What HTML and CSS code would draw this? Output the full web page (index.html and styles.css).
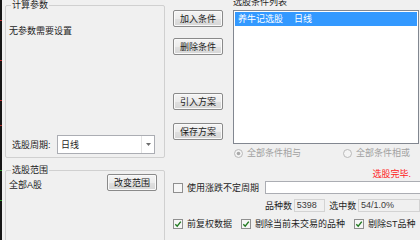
FILE: index.html
```html
<!DOCTYPE html>
<html>
<head>
<meta charset="utf-8">
<link rel="stylesheet" href="styles.css">
</head>
<body>
<div class="strip"></div>
<div class="left">
  <div class="group g1">
    <div class="gtitle">计算参数</div>
    <div class="note">无参数需要设置</div>
    <div class="period">
      <span class="plbl">选股周期:</span>
      <div class="combo">
        <span class="cval">日线</span>
        <span class="drop"><svg width="5" height="3" viewBox="0 0 5 3"><path d="M0 0H5L2.5 3Z" fill="#6d6d6d"/></svg></span>
      </div>
    </div>
  </div>
  <div class="group g2">
    <div class="gtitle">选股范围</div>
    <div class="range">
      <span class="rtext">全部A股</span>
      <button class="btn rbtn">改变范围</button>
    </div>
  </div>
</div>
<div class="right">
  <div class="top">
    <div class="btns">
      <button class="btn b1">加入条件</button>
      <button class="btn b2">删除条件</button>
      <button class="btn b3">引入方案</button>
      <button class="btn b4">保存方案</button>
    </div>
    <div class="listcol">
      <div class="listlbl">选股条件列表</div>
      <div class="list">
        <div class="item sel">养牛记选股<span class="gap">日线</span></div>
      </div>
      <div class="radios">
        <span class="radio r-and">
          <svg width="9" height="9" viewBox="0 0 9 9"><circle cx="4.5" cy="4.5" r="4" fill="#f4f4f4" stroke="#b9b9b9"/><circle cx="4.5" cy="4.5" r="1.8" fill="#a9a9a9"/></svg>
          <span>全部条件相与</span>
        </span>
        <span class="radio r-or">
          <svg width="9" height="9" viewBox="0 0 9 9"><circle cx="4.5" cy="4.5" r="4" fill="#f4f4f4" stroke="#b9b9b9"/></svg>
          <span>全部条件相或</span>
        </span>
      </div>
    </div>
  </div>
  <div class="status">选股完毕.</div>
  <div class="row r1">
    <span class="chk"><svg width="10" height="10" viewBox="0 0 10 10"><rect x="0.5" y="0.5" width="9" height="9" fill="#f6f6f6" stroke="#8f8f8f"/></svg></span>
    <span class="clbl">使用涨跌不定周期</span>
    <span class="input"></span>
  </div>
  <div class="row r2">
    <span class="klbl">品种数</span>
    <span class="ro ro1">5398</span>
    <span class="klbl k2">选中数</span>
    <span class="ro ro2">54/1.0%</span>
  </div>
  <div class="row r3">
    <span class="chk"><svg width="10" height="10" viewBox="0 0 10 10"><rect x="0.5" y="0.5" width="9" height="9" fill="#f6f6f6" stroke="#8f8f8f"/><path d="M2.3 5.2L4.2 7.2L7.8 2.6" fill="none" stroke="#217a21" stroke-width="1.4"/></svg></span>
    <span class="clbl c1">前复权数据</span>
    <span class="chk"><svg width="10" height="10" viewBox="0 0 10 10"><rect x="0.5" y="0.5" width="9" height="9" fill="#f6f6f6" stroke="#8f8f8f"/><path d="M2.3 5.2L4.2 7.2L7.8 2.6" fill="none" stroke="#217a21" stroke-width="1.4"/></svg></span>
    <span class="clbl c2">剔除当前未交易的品种</span>
    <span class="chk"><svg width="10" height="10" viewBox="0 0 10 10"><rect x="0.5" y="0.5" width="9" height="9" fill="#f6f6f6" stroke="#8f8f8f"/><path d="M2.3 5.2L4.2 7.2L7.8 2.6" fill="none" stroke="#217a21" stroke-width="1.4"/></svg></span>
    <span class="clbl">剔除ST品种</span>
  </div>
  <div class="row r4">
    <span class="btn wide"></span>
    <span class="btn wide"></span>
  </div>
</div>
</body>
</html>
```
FILE: styles.css
```css
html, body {
  margin: 0;
  padding: 0;
}
body {
  width: 420px;
  height: 240px;
  overflow: hidden;
  background: #f0f0f0;
  display: flex;
  align-items: flex-start;
  font-family: "Liberation Sans", "Noto Sans CJK SC", sans-serif;
  font-size: 9px;
  line-height: 12px;
  color: #1e1e1e;
}
.strip {
  flex: none;
  width: 2px;
  height: 240px;
  background:
    linear-gradient(#161616 0 20px, #c03030 20px 21px, #161616 21px 60px, #c03030 60px 61px, #161616 61px 100px, #c03030 100px 101px, #161616 101px 125px, #b02a2a 125px 126px, #161616 126px 170px, #2a9a2a 170px 171px, #161616 171px 200px, #2a9a2a 200px 201px, #161616 201px);
}
.left {
  flex: none;
  margin-left: 3px;
  width: 160px;
  display: flex;
  flex-direction: column;
}
.group {
  flex: none;
  box-sizing: border-box;
  border: 1px solid #d0d0d0;
  border-radius: 2px;
  padding: 0 3px;
  display: flex;
  flex-direction: column;
}
.gtitle {
  align-self: flex-start;
  margin-top: -6px;
  margin-left: 2px;
  padding: 0 1px;
  line-height: 11px;
  height: 11px;
  background: #f0f0f0;
  white-space: nowrap;
}
.g1 {
  margin-top: 5px;
  height: 153px;
}
.note {
  margin-top: 14px;
}
.period {
  margin-top: auto;
  margin-bottom: 3px;
  display: flex;
  align-items: center;
}
.plbl {
  width: 48px;
  padding-left: 3px;
  box-sizing: border-box;
}
.combo {
  width: 98px;
  height: 19px;
  box-sizing: border-box;
  border: 1px solid #abadb3;
  background: #fff;
  display: flex;
  align-items: center;
}
.cval {
  flex: 1;
  padding-left: 3px;
}
.drop {
  width: 12px;
  height: 17px;
  border-left: 1px solid #e3e3e3;
  display: flex;
  align-items: center;
  justify-content: center;
}
.g2 {
  margin-top: 12px;
  height: 80px;
}
.range {
  margin-top: -2px;
  display: flex;
  align-items: flex-start;
}
.rtext {
  margin-top: 5px;
}
.rbtn {
  margin-left: auto;
  margin-right: 4px;
  width: 49px;
  height: 18px;
}
.btn {
  display: block;
  box-sizing: border-box;
  width: 50px;
  height: 17px;
  padding: 0;
  border: 1px solid #8a8a8a;
  border-radius: 2px;
  background: linear-gradient(#f4f4f4 0%, #ececec 50%, #e0e0e0 51%, #d6d6d6 100%);
  box-shadow: inset 0 0 0 1px #fafafa;
  font: inherit;
  line-height: 14px;
  color: #1a1a1a;
}
.right {
  flex: none;
  margin-left: 8px;
  width: 247px;
  display: flex;
  flex-direction: column;
}
.top {
  flex: none;
  height: 163px;
  display: flex;
}
.btns {
  width: 50px;
  display: flex;
  flex-direction: column;
}
.b1 { margin-top: 10px; }
.b2 { margin-top: 11px; }
.b3 { margin-top: 38px; }
.b4 { margin-top: 13px; }
.listcol {
  margin-left: 10px;
  width: 186px;
  display: flex;
  flex-direction: column;
}
.listlbl {
  flex: none;
  margin-top: -3px;
  line-height: 11px;
  height: 11px;
}
.list {
  flex: none;
  margin-top: 2px;
  height: 134px;
  box-sizing: border-box;
  border: 1px solid #828790;
  background: #fff;
  padding: 1px 1px;
}
.item {
  height: 14px;
  line-height: 14px;
  padding-left: 3px;
}
.item.sel {
  background: #3399ff;
  color: #fff;
}
.gap {
  margin-left: 11px;
}
.radios {
  margin-top: 3px;
  display: flex;
  align-items: center;
  color: #a0a0a0;
}
.radio {
  display: flex;
  align-items: center;
}
.radio svg {
  margin-right: 4px;
}
.r-and {
  margin-left: 1px;
}
.r-or {
  margin-left: 42px;
}
.status {
  flex: none;
  margin-top: 5px;
  height: 12px;
  text-align: right;
  padding-right: 9px;
  color: #ff2020;
}
.row {
  flex: none;
  display: flex;
  align-items: center;
}
.r1 {
  margin-top: 1px;
  height: 13px;
}
.chk {
  display: flex;
  width: 10px;
  height: 10px;
  margin-right: 4px;
}
.clbl {
  white-space: nowrap;
}
.input {
  margin-left: 6px;
  width: 160px;
  flex: none;
  height: 13px;
  box-sizing: border-box;
  border: 1px solid #abadb3;
  background: #fff;
}
.r2 {
  margin-top: 5px;
  height: 13px;
  padding-left: 92px;
}
.klbl {
  width: 29px;
  white-space: nowrap;
}
.k2 {
  margin-left: 4px;
}
.ro {
  box-sizing: border-box;
  height: 13px;
  line-height: 11px;
  border: 1px solid #d3d3d3;
  background: #f0f0f0;
  padding-left: 2px;
  color: #3a3a3a;
}
.ro1 {
  width: 32px;
}
.ro2 {
  width: 62px;
  flex: none;
}
.r3 {
  margin-top: 5px;
  height: 13px;
}
.c1 {
  margin-right: 9px;
}
.c2 {
  margin-right: 9px;
}
.r4 {
  margin-top: 11px;
  padding-left: 124px;
}
.wide {
  width: 55px;
  height: 18px;
  flex: none;
}
.r4 .wide + .wide {
  margin-left: 11px;
}
```
